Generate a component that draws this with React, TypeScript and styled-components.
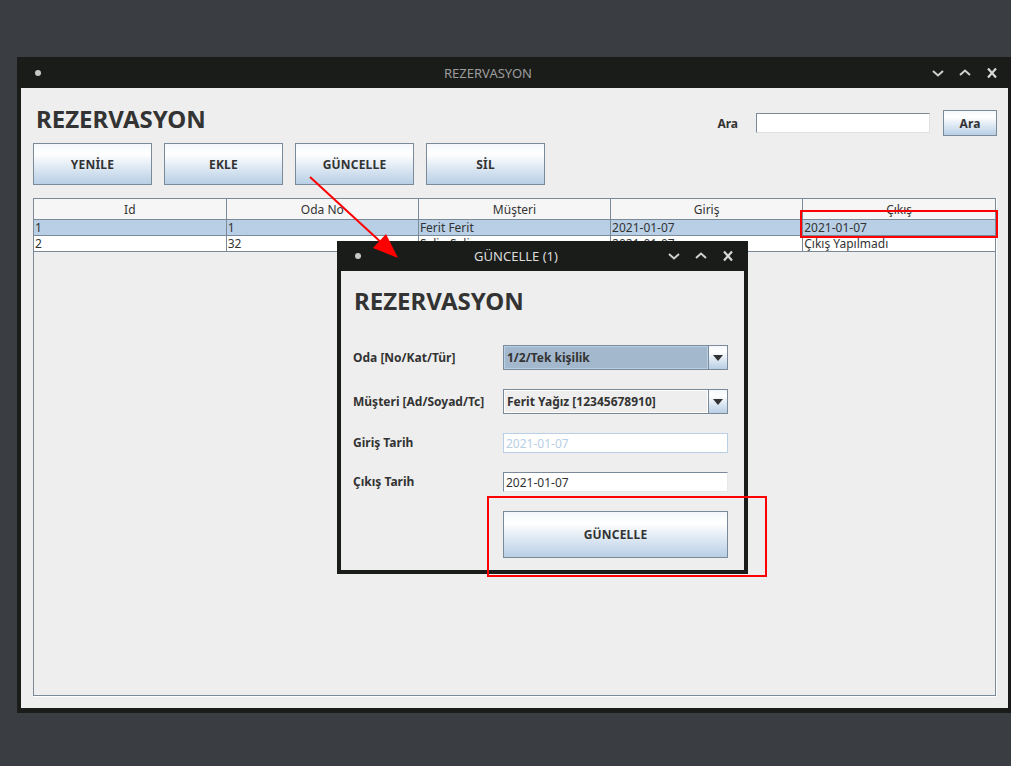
import React from 'react';
import styled, { createGlobalStyle } from 'styled-components';

const GlobalStyle = createGlobalStyle`
  html, body {
    margin: 0;
    padding: 0;
    background: #3a3e42;
    overflow: hidden;
  }
  body {
    font-family: "Noto Sans", "DejaVu Sans", sans-serif;
  }
`;

const Desktop = styled.div`
  position: relative;
  width: 1011px;
  height: 766px;
  padding: 57px 0 0 17px;
  box-sizing: border-box;
`;

const Window = styled.div`
  display: flex;
  flex-direction: column;
  width: 994px;
  height: 656px;
  background: #1a1c1a;
  box-sizing: border-box;
  padding: 0 3px 5px 4px;
`;

const Dialog = styled.div`
  position: absolute;
  left: 337px;
  top: 241px;
  display: flex;
  flex-direction: column;
  width: 411px;
  height: 333px;
  background: #1a1c1a;
  box-sizing: border-box;
  padding: 0 4px 4px 4px;
`;

const TitleBar = styled.div<{ $h: number }>`
  display: flex;
  align-items: center;
  height: ${(p) => p.$h}px;
  flex-shrink: 0;
`;

const Dot = styled.span`
  width: 6px;
  height: 6px;
  border-radius: 50%;
  background: #c8c8c8;
  margin-left: 14px;
`;

const Title = styled.div<{ $color: string }>`
  flex: 1;
  text-align: center;
  font-size: 13px;
  color: ${(p) => p.$color};
  padding-left: 4px;
`;

const Controls = styled.div`
  display: flex;
  align-items: center;
  gap: 13px;
  margin-right: 9px;
`;

const Content = styled.div`
  flex: 1;
  display: flex;
  flex-direction: column;
  background: #eeeeee;
  padding: 12px;
  min-height: 0;
`;

const TopBar = styled.div`
  display: flex;
  align-items: flex-start;
  justify-content: space-between;
  height: 43px;
`;

const Heading = styled.h1`
  margin: 3px 0 0 3px;
  font-size: 24px;
  line-height: 32px;
  font-weight: 700;
  color: #333333;
`;

const Search = styled.div`
  display: flex;
  align-items: center;
  margin: 10px -1px 0 0;
`;

const Label = styled.span`
  font-size: 12px;
  font-weight: 700;
  color: #333333;
`;

const SearchInput = styled.div`
  width: 174px;
  height: 20px;
  box-sizing: border-box;
  background: #fff;
  border: 1px solid #7a8a99;
  border-right-color: #e0e0e0;
  border-bottom-color: #e0e0e0;
  margin: 0 13px 0 18px;
`;

const Button = styled.div<{ $w: number; $h: number }>`
  display: flex;
  align-items: center;
  justify-content: center;
  width: ${(p) => p.$w}px;
  height: ${(p) => p.$h}px;
  box-sizing: border-box;
  border: 1px solid #7a8a99;
  background: linear-gradient(to bottom, #f4f8fc 0%, #ffffff 25%, #dde8f3 60%, #b8cfe5 100%);
  font-size: 12px;
  font-weight: 700;
  color: #333333;
  letter-spacing: 0.2px;
`;

const ButtonRow = styled.div`
  display: flex;
  gap: 12px;
  margin-bottom: 13px;
`;

const ScrollPane = styled.div`
  flex: 1;
  border: 1px solid #7a8a99;
  box-shadow: 0 1px 0 #ffffff, 1px 0 0 #ffffff;
  background: #eeeeee;
  overflow: hidden;
`;

const Table = styled.table`
  width: 100%;
  table-layout: fixed;
  border-collapse: collapse;
  font-size: 12px;
  color: #333333;
`;

const Th = styled.th`
  height: 20px;
  padding: 0;
  font-weight: 400;
  text-align: center;
  background: #f6f6f6;
  border-right: 1px solid #7a8a99;
  border-bottom: 1px solid #7a8a99;
  &:last-child {
    border-right: none;
  }
`;

const Td = styled.td<{ $selected: boolean }>`
  height: 15px;
  padding: 0 0 0 1px;
  line-height: 15px;
  white-space: nowrap;
  overflow: hidden;
  background: ${(p) => (p.$selected ? '#b8cfe5' : '#ffffff')};
  border-right: 1px solid #7a8a99;
  border-bottom: 1px solid #7a8a99;
  &:last-child {
    border-right: none;
  }
`;

const DialogBody = styled.div`
  flex: 1;
  background: #eeeeee;
  padding: 14px 16px 0 12px;
`;

const DialogHeading = styled(Heading)`
  margin: 0 0 28px 1px;
`;

const Form = styled.div`
  display: grid;
  grid-template-columns: 150px 225px;
  row-gap: 19px;
  align-items: center;
`;

const Combo = styled.div<{ $focused: boolean }>`
  display: flex;
  height: 25px;
  box-sizing: border-box;
  border: 1px solid #7a8a99;
  background: ${(p) => (p.$focused ? '#a3b8cc' : '#eeeeee')};
`;

const ComboText = styled.div<{ $focused: boolean }>`
  flex: 1;
  display: flex;
  align-items: center;
  padding-left: 2px;
  border: 1px solid ${(p) => (p.$focused ? '#b8cfe5' : '#ffffff')};
  font-size: 12px;
  font-weight: 700;
  color: #333333;
`;

const ComboArrow = styled.div`
  display: flex;
  align-items: center;
  justify-content: center;
  width: 18px;
  border-left: 1px solid #7a8a99;
  background: linear-gradient(to bottom, #f4f8fc 0%, #ffffff 25%, #dde8f3 60%, #b8cfe5 100%);
`;

const TextField = styled.div<{ $disabled: boolean }>`
  display: flex;
  align-items: center;
  height: 20px;
  box-sizing: border-box;
  padding-left: 2px;
  background: #ffffff;
  border: 1px solid ${(p) => (p.$disabled ? '#b8cfe5' : '#7a8a99')};
  ${(p) => (p.$disabled ? '' : 'border-right-color: #e8e8e8; border-bottom-color: #e8e8e8;')}
  font-size: 12px;
  color: ${(p) => (p.$disabled ? '#b8cfe5' : '#333333')};
`;

const FormLabel = styled(Label)`
  line-height: 16px;
`;

const Overlay = styled.svg`
  position: absolute;
  left: 0;
  top: 0;
  pointer-events: none;
`;

const Chevron = ({ up }: { up?: boolean }) => (
  <svg width="14" height="10" viewBox="0 0 14 10">
    <polyline
      points={up ? '2,7 7,2.5 12,7' : '2,3 7,7.5 12,3'}
      fill="none"
      stroke="#d0d0d0"
      strokeWidth="2"
    />
  </svg>
);

const Close = () => (
  <svg width="14" height="12" viewBox="0 0 14 12">
    <path d="M3 1.5 L11 10.5 M11 1.5 L3 10.5" stroke="#d8d8d8" strokeWidth="2.2" />
  </svg>
);

const WindowControls = () => (
  <Controls>
    <Chevron />
    <Chevron up />
    <Close />
  </Controls>
);

const Triangle = () => (
  <svg width="10" height="6" viewBox="0 0 10 6">
    <polygon points="0,0 10,0 5,6" fill="#333" />
  </svg>
);

const rows = [
  ['1', '1', 'Ferit Ferit', '2021-01-07', '2021-01-07'],
  ['2', '32', 'Selin Selin', '2021-01-07', 'Çıkış Yapılmadı'],
];

const headers = ['Id', 'Oda No', 'Müşteri', 'Giriş', 'Çıkış'];

export default function App() {
  return (
    <>
      <GlobalStyle />
      <Desktop>
        <Window>
          <TitleBar $h={31}>
            <Dot />
            <Title $color="#9c9c9c">REZERVASYON</Title>
            <WindowControls />
          </TitleBar>
          <Content>
            <TopBar>
              <Heading>REZERVASYON</Heading>
              <Search>
                <Label>Ara</Label>
                <SearchInput />
                <Button $w={54} $h={26}>Ara</Button>
              </Search>
            </TopBar>
            <ButtonRow>
              {['YENİLE', 'EKLE', 'GÜNCELLE', 'SİL'].map((b) => (
                <Button key={b} $w={119} $h={42}>
                  {b}
                </Button>
              ))}
            </ButtonRow>
            <ScrollPane>
              <Table>
                <thead>
                  <tr>
                    {headers.map((h) => (
                      <Th key={h}>{h}</Th>
                    ))}
                  </tr>
                </thead>
                <tbody>
                  {rows.map((r, i) => (
                    <tr key={i}>
                      {r.map((c, j) => (
                        <Td key={j} $selected={i === 0}>
                          {c}
                        </Td>
                      ))}
                    </tr>
                  ))}
                </tbody>
              </Table>
            </ScrollPane>
          </Content>
        </Window>

        <Dialog>
          <TitleBar $h={30}>
            <Dot />
            <Title $color="#dcdcdc">GÜNCELLE (1)</Title>
            <WindowControls />
          </TitleBar>
          <DialogBody>
            <DialogHeading>REZERVASYON</DialogHeading>
            <Form>
              <FormLabel>Oda [No/Kat/Tür]</FormLabel>
              <Combo $focused>
                <ComboText $focused>1/2/Tek kişilik</ComboText>
                <ComboArrow>
                  <Triangle />
                </ComboArrow>
              </Combo>
              <FormLabel>Müşteri [Ad/Soyad/Tc]</FormLabel>
              <Combo $focused={false}>
                <ComboText $focused={false}>Ferit Yağız [12345678910]</ComboText>
                <ComboArrow>
                  <Triangle />
                </ComboArrow>
              </Combo>
              <FormLabel>Giriş Tarih</FormLabel>
              <TextField $disabled>2021-01-07</TextField>
              <FormLabel>Çıkış Tarih</FormLabel>
              <TextField $disabled={false}>2021-01-07</TextField>
              <span />
              <Button $w={225} $h={47}>GÜNCELLE</Button>
            </Form>
          </DialogBody>
        </Dialog>

        <Overlay width="1011" height="766" viewBox="0 0 1011 766">
          <rect x="801" y="211" width="196" height="26" fill="none" stroke="#ff0000" strokeWidth="2" />
          <rect x="488" y="497" width="278" height="79" fill="none" stroke="#ff0000" strokeWidth="2" />
          <line x1="310" y1="177" x2="384" y2="245" stroke="#ff0000" strokeWidth="2" />
          <polygon points="398,258 373,248 386,234" fill="#ff0000" />
        </Overlay>
      </Desktop>
    </>
  );
}
